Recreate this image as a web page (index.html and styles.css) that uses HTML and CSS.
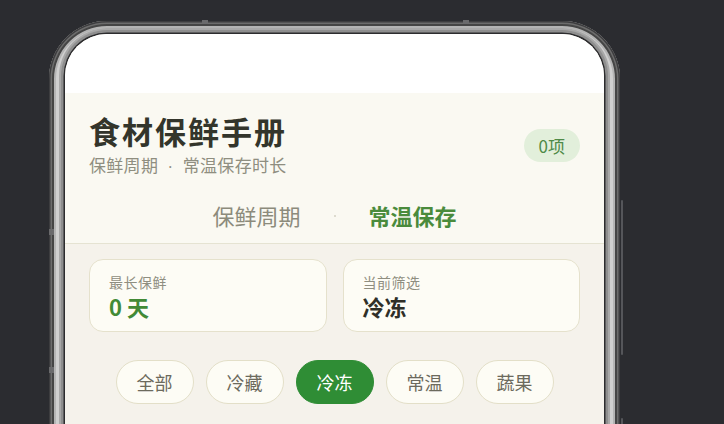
FILE: index.html
```html
<!DOCTYPE html>
<html lang="zh-CN">
<head>
    <meta charset="UTF-8">
    <meta name="viewport" content="width=device-width, initial-scale=1.0">
    <title>食材保鲜手册</title>
    <link rel="stylesheet" href="styles.css">
</head>
<body>
    <div class="phone">
        <span class="mark mark-top-a"></span>
        <span class="mark mark-top-b"></span>
        <span class="mark mark-left-a"></span>
        <span class="mark mark-left-b"></span>
        <span class="side-key key-volume"></span>
        <span class="side-key key-power"></span>

        <div class="screen">
            <div class="status-bar"></div>

            <header class="header">
                <div class="header-top">
                    <div>
                        <h1 class="title">食材保鲜手册</h1>
                        <p class="subtitle">保鲜周期 <span class="sep">·</span> 常温保存时长</p>
                    </div>
                    <span class="badge">0项</span>
                </div>
                <nav class="tabs">
                    <span class="tab">保鲜周期</span>
                    <span class="tab-dot"></span>
                    <span class="tab active">常温保存</span>
                </nav>
            </header>

            <main class="content">
                <div class="stats">
                    <div class="stat-card">
                        <div class="stat-label">最长保鲜</div>
                        <div class="stat-value green">0 天</div>
                    </div>
                    <div class="stat-card">
                        <div class="stat-label">当前筛选</div>
                        <div class="stat-value">冷冻</div>
                    </div>
                </div>

                <div class="chips">
                    <button class="chip">全部</button>
                    <button class="chip">冷藏</button>
                    <button class="chip active">冷冻</button>
                    <button class="chip">常温</button>
                    <button class="chip">蔬果</button>
                </div>
            </main>
        </div>
    </div>
</body>
</html>
```

FILE: styles.css
```css
* {
    box-sizing: border-box;
}

html, body {
    height: 100%;
}

body {
    margin: 0;
    overflow: hidden;
    background-color: #2b2c30;
    font-family: "Noto Sans CJK SC", "Noto Sans", sans-serif;
}

/* phone body: metal rim drawn with stacked rings */
.phone {
    position: relative;
    width: 571px;
    height: 520px;
    margin: 21px 0 0 49px;
    padding: 13px 16px 0;
    border-radius: 58px 58px 0 0;
    background-color: #cfcfcf;
    box-shadow:
        inset 0 0 0 1.5px #3d3d3f,
        inset 0 0 0 3px #6c6c6c,
        inset 0 0 0 5px #454545,
        inset 0 0 0 7px #b4b4b4;
}

.mark {
    position: absolute;
    background-color: #6a6a6c;
}

.mark-top-a, .mark-top-b {
    top: -1px;
    width: 6px;
    height: 4px;
}

.mark-top-a { left: 153px; }
.mark-top-b { left: 414px; }

.mark-left-a, .mark-left-b {
    left: 0;
    width: 5px;
    height: 6px;
}

.mark-left-a { top: 208px; }
.mark-left-b { top: 346px; }

.side-key {
    position: absolute;
    right: -3px;
    width: 2px;
    background-color: #55565a;
    border-radius: 1px;
}

.key-volume {
    top: 179px;
    height: 155px;
}

.key-power {
    top: 397px;
    height: 80px;
}

.screen {
    height: 100%;
    border-radius: 42px 42px 0 0;
    overflow: hidden;
    background-color: #f5f2eb;
    box-shadow:
        0 0 0 1.5px #2c2c2e,
        0 0 0 4px #8e8e8e,
        0 0 0 6px #a8a8a8;
}

.status-bar {
    height: 59px;
    background-color: #fff;
}

/* header */
.header {
    background-color: #faf9f2;
    border-bottom: 1px solid #e5e3d2;
}

.header-top {
    display: flex;
    align-items: center;
    justify-content: space-between;
    padding: 20px 24px 0;
}

.title {
    margin: 0;
    font-size: 31px;
    line-height: 36px;
    font-weight: bold;
    letter-spacing: 2px;
    color: #33352b;
}

.subtitle {
    margin: 4px 0 0;
    font-size: 17px;
    line-height: 24px;
    letter-spacing: 0.3px;
    color: #8f8e80;
}

.subtitle .sep {
    margin: 0 6px;
    font-family: "Noto Sans", sans-serif;
    font-size: 15px;
}

.badge {
    padding: 4px 15px;
    line-height: 25px;
    font-size: 17px;
    color: #4f8a47;
    background-color: #e2efdb;
    border-radius: 17px;
}

.tabs {
    display: flex;
    align-items: center;
    justify-content: center;
    gap: 33px;
    margin-top: 22px;
    padding-bottom: 12px;
}

.tab {
    font-size: 22px;
    line-height: 31px;
    color: #8c8b7c;
}

.tab.active {
    font-weight: bold;
    color: #4a8b3c;
}

.tab-dot {
    width: 2px;
    height: 2px;
    border-radius: 50%;
    background-color: #d3d1c3;
}

/* content */
.content {
    padding: 15px 24px;
}

.stats {
    display: grid;
    grid-template-columns: 1fr 1fr;
    gap: 16px;
}

.stat-card {
    padding: 12px 19px 10px;
    background-color: #fdfcf5;
    border: 1px solid #e5e1cc;
    border-radius: 14px;
}

.stat-label {
    font-size: 14px;
    line-height: 20px;
    letter-spacing: 0.5px;
    color: #8f8e80;
}

.stat-value {
    font-size: 22px;
    line-height: 29px;
    font-weight: bold;
    color: #2f2f28;
}

.stat-value.green {
    color: #428a36;
}

.chips {
    display: flex;
    justify-content: center;
    gap: 12px;
    margin-top: 28px;
}

.chip {
    height: 44px;
    padding: 0 20px;
    font-family: inherit;
    font-size: 18px;
    color: #6c6a5d;
    background-color: #fdfcf5;
    border: 1px solid #e3dfc8;
    border-radius: 22px;
}

.chip.active {
    color: #fff;
    background-color: #2f8d35;
    border-color: #2f8d35;
}
```
